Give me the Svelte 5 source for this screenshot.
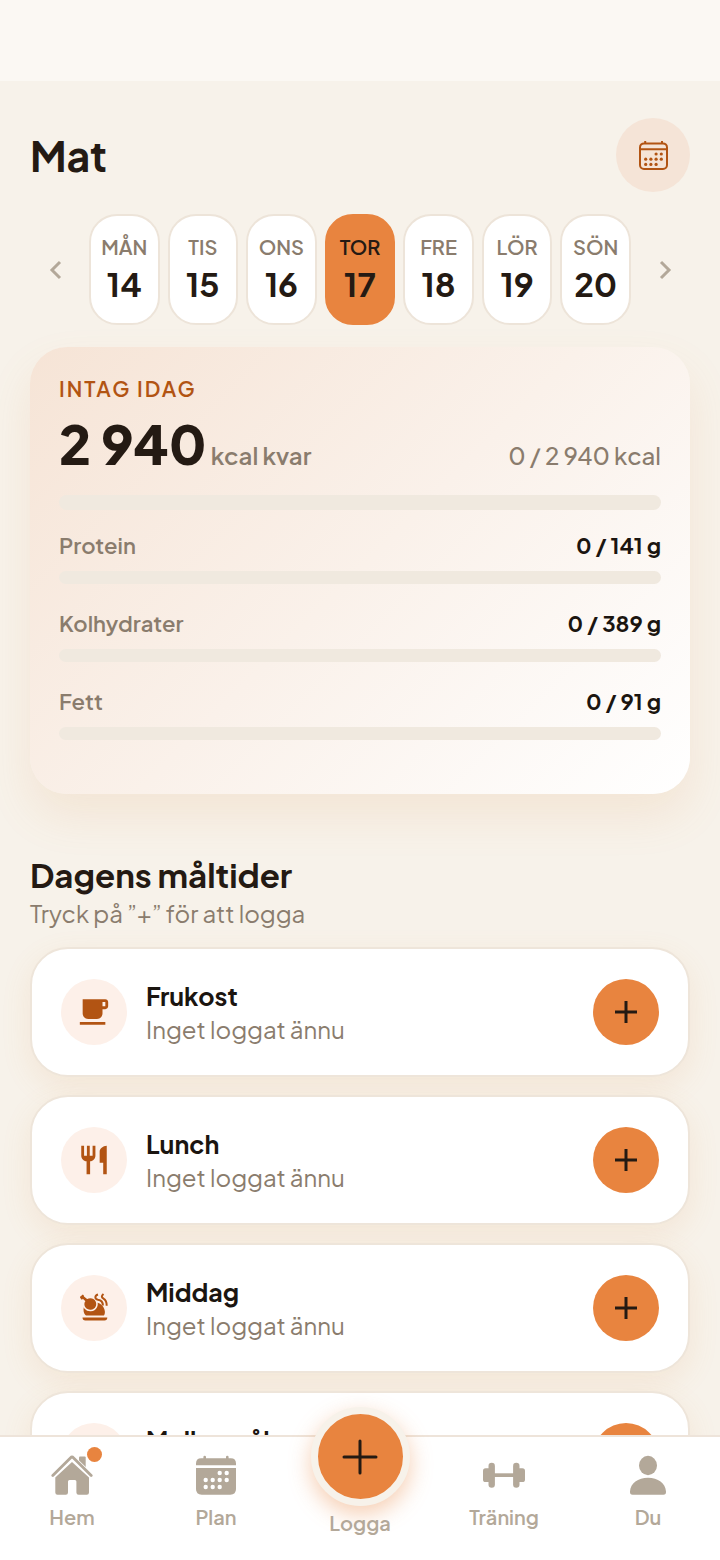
<script>
  const days = [
    { name: 'MÅN', date: 14 },
    { name: 'TIS', date: 15 },
    { name: 'ONS', date: 16 },
    { name: 'TOR', date: 17 },
    { name: 'FRE', date: 18 },
    { name: 'LÖR', date: 19 },
    { name: 'SÖN', date: 20 }
  ];
  let selected = $state(17);

  const macros = [
    { name: 'Protein', eaten: 0, goal: 141 },
    { name: 'Kolhydrater', eaten: 0, goal: 389 },
    { name: 'Fett', eaten: 0, goal: 91 }
  ];

  const meals = [
    { name: 'Frukost', icon: 'cup' },
    { name: 'Lunch', icon: 'cutlery' },
    { name: 'Middag', icon: 'roast' },
    { name: 'Mellanmål', icon: 'cup' }
  ];

  // calendar dots as [column, row]
  const dots = [[2, 0], [3, 0], [0, 1], [1, 1], [2, 1], [3, 1], [0, 2], [1, 2], [2, 2]];
</script>

<div class="app">
  <div class="status"></div>

  <main>
    <header>
      <h1>Mat</h1>
      <button class="calendar" aria-label="Öppna kalender">
        <svg width="31" height="31" viewBox="0 0 31 31">
          <g fill="none" stroke="currentColor" stroke-width="2">
            <rect x="2" y="3.4" width="27" height="25.6" rx="4" />
            <path d="M2 9.2h27M7.2 1v2.4M24 1v2.4" />
          </g>
          {#each dots as [c, r]}
            <circle cx={7.7 + c * 5.2} cy={14 + r * 5.2} r="1.6" fill="currentColor" />
          {/each}
        </svg>
      </button>
    </header>

    <div class="week">
      <button class="arrow" aria-label="Föregående vecka">
        <svg width="14" height="20" viewBox="0 0 14 20"><path d="M11 2L3 10l8 8" /></svg>
      </button>
      <div class="days">
        {#each days as day}
          <button class="day" class:active={day.date === selected} onclick={() => (selected = day.date)}>
            <span>{day.name}</span>
            <strong>{day.date}</strong>
          </button>
        {/each}
      </div>
      <button class="arrow" aria-label="Nästa vecka">
        <svg width="14" height="20" viewBox="0 0 14 20"><path d="M3 2l8 8-8 8" /></svg>
      </button>
    </div>

    <section class="intake">
      <h2>INTAG IDAG</h2>
      <div class="total">
        <p class="left"><strong>2 940</strong> kcal kvar</p>
        <p>0 / 2 940 kcal</p>
      </div>
      <div class="bar big"><div style="width: 0%"></div></div>
      {#each macros as macro}
        <div class="macro">
          <span>{macro.name}</span>
          <strong>{macro.eaten} / {macro.goal} g</strong>
        </div>
        <div class="bar"><div style="width: {(macro.eaten / macro.goal) * 100}%"></div></div>
      {/each}
    </section>

    <section class="meals">
      <h2>Dagens måltider</h2>
      <p class="hint">Tryck på ”+” för att logga</p>
      <ul>
        {#each meals as meal}
          <li>
            <div class="icon">
              {#if meal.icon === 'cup'}
                <svg width="34" height="34" viewBox="0 0 24 24">
                  <path d="M20 3H4v10c0 2.210 1.790 4 4 4h6c2.210 0 4-1.790 4-4v-3h2c1.110 0 2-.890 2-2V5c0-1.110-.890-2-2-2zm0 5h-2V5h2v3zM2 21h18v-2H2v2z" />
                </svg>
              {:else if meal.icon === 'cutlery'}
                <svg width="34" height="34" viewBox="0 0 24 24">
                  <path d="M11 9H9V2H7v7H5V2H3v7c0 2.120 1.660 3.840 3.750 3.970V22h2.500v-9.030C11.340 12.840 13 11.120 13 9V2h-2v7zm5-3v8h2.500v8H21V2c-2.760 0-5 2.240-5 4z" />
                </svg>
              {:else}
                <svg width="36" height="36" viewBox="0 0 36 36">
                  <path d="M8.500 15c-1.800 4.500-1 8.500 1.500 10.500h17.800c1.800-2 1.300-6-.8-9-2-2.800-4.500-4-7.500-4z" />
                  <path d="M6.500 27.500h24.800c0 2-1 3-2.800 3H9.300c-1.800 0-2.800-1-2.800-3z" />
                  <path class="leg" d="M10.700 9.300c3.300-1.700 7-1.200 8.700 1.700 2.200 4-.2 8.500-4.600 8.800-4.200.3-7.300-3.300-6.200-7.200z" />
                  <path d="M10.500 12.300L6.800 8.700c-.6 1.300-2 1-2-.3-1.300-.6-.9-2.200.6-2.300.3-1.900 2.700-1.500 2.600.4l4.300 3.600z" />
                  <path class="steam" d="M22 4.500c-3.600 1-3.400 4.700 0 5.200 3.400.4 4.900 2 4.900 5.800M27.500 4c-2.400 2-2 3.600 0 4.700 2.400 1.400 3.200 3.600 3.200 7" />
                </svg>
              {/if}
            </div>
            <div class="text">
              <h3>{meal.name}</h3>
              <p>Inget loggat ännu</p>
            </div>
            <button class="add" aria-label="Logga {meal.name}">
              <svg width="22" height="22" viewBox="0 0 22 22"><path d="M11 0v22M0 11h22" /></svg>
            </button>
          </li>
        {/each}
      </ul>
    </section>
  </main>

  <nav>
    <a href="#hem">
      <span class="glyph">
        <svg width="42" height="42" viewBox="0 0 42 42">
          <path d="M28 3.600q0-1 1-1h4.700q1 0 1 1V14L28 8z" />
          <path d="M2 21.600L19 5q2-2 4 0l17 16.600" fill="none" stroke="#fff" stroke-width="5" />
          <path d="M21 8L38 23.500v15q0 2.200-2.200 2.200h-8.200q-2.200 0-2.200-2.200V27.500q0-1.500-1.500-1.500h-5.400q-1.500 0-1.500 1.500v11q0 2.200-2.200 2.200H6.500q-2.200 0-2.200-2.200v-15z" />
          <path d="M1.800 21.400L19.400 3.900q1.600-1.600 3.200 0l17.600 17.500" fill="none" stroke="currentColor" stroke-width="2.800" stroke-linecap="round" />
        </svg>
        <i class="badge"></i>
      </span>
      Hem
    </a>
    <a href="#plan">
      <svg width="42" height="42" viewBox="0 0 42 42">
        <path d="M1 11.300V9.500q0-5.200 5.200-5.200h2.200V3a1.300 1.300 0 0 1 2.600 0v1.300h20V3a1.300 1.300 0 0 1 2.600 0v1.300h2.200q5.200 0 5.200 5.200v1.800z" />
        <path d="M1 14h40v21q0 5.700-5.700 5.700H6.700Q1 40.700 1 35z" />
        {#each dots as [c, r]}
          <circle cx={10.7 + c * 7} cy={19 + r * 7} r="2.200" fill="#fff" />
        {/each}
      </svg>
      Plan
    </a>
    <a href="#logga" class="log">
      <span class="fab">
        <svg width="36" height="36" viewBox="0 0 36 36"><path d="M18 2v32M2 18h32" /></svg>
      </span>
      Logga
    </a>
    <a href="#traning">
      <svg width="42" height="42" viewBox="0 0 42 42">
        <rect x="5.500" y="8.700" width="6.400" height="25" rx="3.200" />
        <rect x="30.100" y="8.700" width="6.400" height="25" rx="3.200" />
        <rect x="0" y="14.300" width="8" height="13.700" rx="2.600" />
        <rect x="34" y="14.300" width="8" height="13.700" rx="2.600" />
        <path d="M11 19.300h20V23H11z" />
      </svg>
      Träning
    </a>
    <a href="#du">
      <svg width="42" height="42" viewBox="0 0 42 42">
        <ellipse cx="21" cy="11.500" rx="9" ry="9.700" />
        <path d="M3 37.500C3.500 29 11 23.700 21 23.700S38.500 29 39 37.500q.2 3.200-2.600 3.200H5.600Q2.800 40.700 3 37.500z" />
      </svg>
      Du
    </a>
  </nav>
</div>

<style>
  :global(body) {
    margin: 0;
    background: #f7f2ea;
  }
  .app {
    height: 100vh;
    display: flex;
    flex-direction: column;
    overflow: hidden;
    background: #f7f2ea;
    color: #241a13;
    font-family: 'Plus Jakarta Sans', Inter, 'Noto Sans', sans-serif;
  }
  h1, h2, h3, p, ul {
    margin: 0;
    padding: 0;
  }
  button {
    border: 0;
    padding: 0;
    background: none;
    color: inherit;
    font: inherit;
    cursor: pointer;
  }
  svg {
    display: block;
    fill: currentColor;
  }
  .status {
    flex: none;
    height: 81px;
    background: #fbf8f3;
  }
  main {
    flex: 1;
    min-height: 0;
    padding: 37px 30px 0;
    overflow-y: auto;
    scrollbar-width: none;
  }
  header {
    display: flex;
    align-items: center;
    justify-content: space-between;
  }
  h1 {
    font-size: 41px;
    font-weight: 700;
    line-height: 52px;
  }
  .calendar {
    width: 74px;
    height: 74px;
    display: grid;
    place-items: center;
    border-radius: 50%;
    background: #f5e4d7;
    color: #b25413;
  }

  .week {
    display: flex;
    gap: 8px;
    margin-top: 22px;
  }
  .arrow {
    width: 51px;
    display: grid;
    place-items: center;
  }
  .arrow path {
    fill: none;
    stroke: #b3a899;
    stroke-width: 3;
  }
  .days {
    flex: 1;
    display: grid;
    grid-template-columns: repeat(7, 1fr);
    gap: 8px;
  }
  .day {
    box-sizing: border-box;
    height: 111px;
    display: flex;
    flex-direction: column;
    align-items: center;
    gap: 3px;
    padding-top: 17px;
    border: 2px solid #ede4d9;
    border-radius: 28px;
    background: #fff;
  }
  .day span {
    color: #8a7c6d;
    font-size: 20px;
    font-weight: 600;
    line-height: 28px;
  }
  .day strong {
    font-size: 33px;
    font-weight: 700;
    line-height: 40px;
  }
  .day.active {
    border-color: #e8843f;
    background: #e8843f;
  }
  .day.active span {
    color: #241a13;
  }

  .intake {
    margin-top: 22px;
    padding: 28px 29px 54px;
    border-radius: 37px;
    background: linear-gradient(135deg, #f6e4d6 0%, #faf1ea 50%, #fff 100%);
    box-shadow: 0 22px 44px rgba(225, 150, 75, 0.13);
  }
  .intake h2 {
    color: #b25413;
    font-size: 21px;
    font-weight: 600;
    line-height: 28px;
    letter-spacing: 2px;
  }
  .total {
    display: flex;
    align-items: baseline;
    justify-content: space-between;
    margin-top: 6px;
    color: #8a7c6d;
    font-size: 24px;
    font-weight: 500;
    line-height: 68px;
  }
  .left {
    font-weight: 600;
  }
  .left strong {
    color: #241a13;
    font-size: 54px;
    font-weight: 800;
  }
  .bar {
    height: 13px;
    border-radius: 8px;
    background: #f0e9df;
    overflow: hidden;
  }
  .bar.big {
    height: 15px;
    margin-top: 6px;
  }
  .bar div {
    height: 100%;
    background: #e8843f;
  }
  .macro {
    display: flex;
    justify-content: space-between;
    padding: 23px 0 10px;
    color: #8a7c6d;
    font-size: 22px;
    font-weight: 600;
    line-height: 32px;
  }
  .bar.big + .macro {
    padding-top: 19px;
  }
  .macro strong {
    color: #1b1510;
    font-weight: 700;
  }

  .meals {
    margin-top: 58px;
  }
  .meals h2 {
    font-size: 33px;
    font-weight: 700;
    line-height: 46px;
  }
  .hint {
    color: #8a7c6d;
    font-size: 24px;
    line-height: 30px;
  }
  ul {
    display: grid;
    gap: 18px;
    margin-top: 19px;
    list-style: none;
  }
  li {
    box-sizing: border-box;
    display: flex;
    align-items: center;
    gap: 19px;
    padding: 30px 29px;
    border: 2px solid #eee5da;
    border-radius: 38px;
    background: #fff;
    box-shadow: 0 10px 30px rgba(225, 150, 75, 0.12);
  }
  .icon, .add {
    flex: none;
    width: 66px;
    height: 66px;
    display: grid;
    place-items: center;
    border-radius: 50%;
  }
  .icon {
    background: #fdf0e9;
    color: #b25413;
  }
  .leg {
    stroke: #fdf0e9;
    stroke-width: 3;
    paint-order: stroke;
  }
  .steam {
    fill: none;
    stroke: currentColor;
    stroke-width: 2;
  }
  .text {
    flex: 1;
  }
  h3 {
    color: #1b1510;
    font-size: 25px;
    font-weight: 700;
    line-height: 34px;
  }
  .text p {
    color: #8a7c6d;
    font-size: 24px;
    line-height: 32px;
  }
  .add {
    background: #e8843f;
  }
  .add path {
    stroke: #241a13;
    stroke-width: 3;
  }

  nav {
    position: relative;
    flex: none;
    display: grid;
    grid-template-columns: repeat(5, 1fr);
    border-top: 2px solid #eee4da;
    background: #fff;
  }
  nav a {
    display: flex;
    flex-direction: column;
    align-items: center;
    gap: 6px;
    padding: 17px 0 29px;
    color: #b3a899;
    font-size: 20px;
    font-weight: 600;
    line-height: 29px;
    text-decoration: none;
  }
  .glyph {
    position: relative;
  }
  .badge {
    position: absolute;
    top: -7px;
    right: -9px;
    width: 15px;
    height: 15px;
    border-radius: 50%;
    background: #e8843f;
  }
  nav .log {
    gap: 2px;
    margin-top: -30px;
    padding: 0 0 23px;
  }
  .fab {
    width: 85px;
    height: 85px;
    display: grid;
    place-items: center;
    border: 7px solid #f7f2ea;
    border-radius: 50%;
    background: #e8843f;
    box-shadow: 0 8px 22px rgba(232, 132, 63, 0.4);
  }
  .fab path {
    stroke: #241a13;
    stroke-width: 3;
    stroke-linecap: round;
  }
</style>
